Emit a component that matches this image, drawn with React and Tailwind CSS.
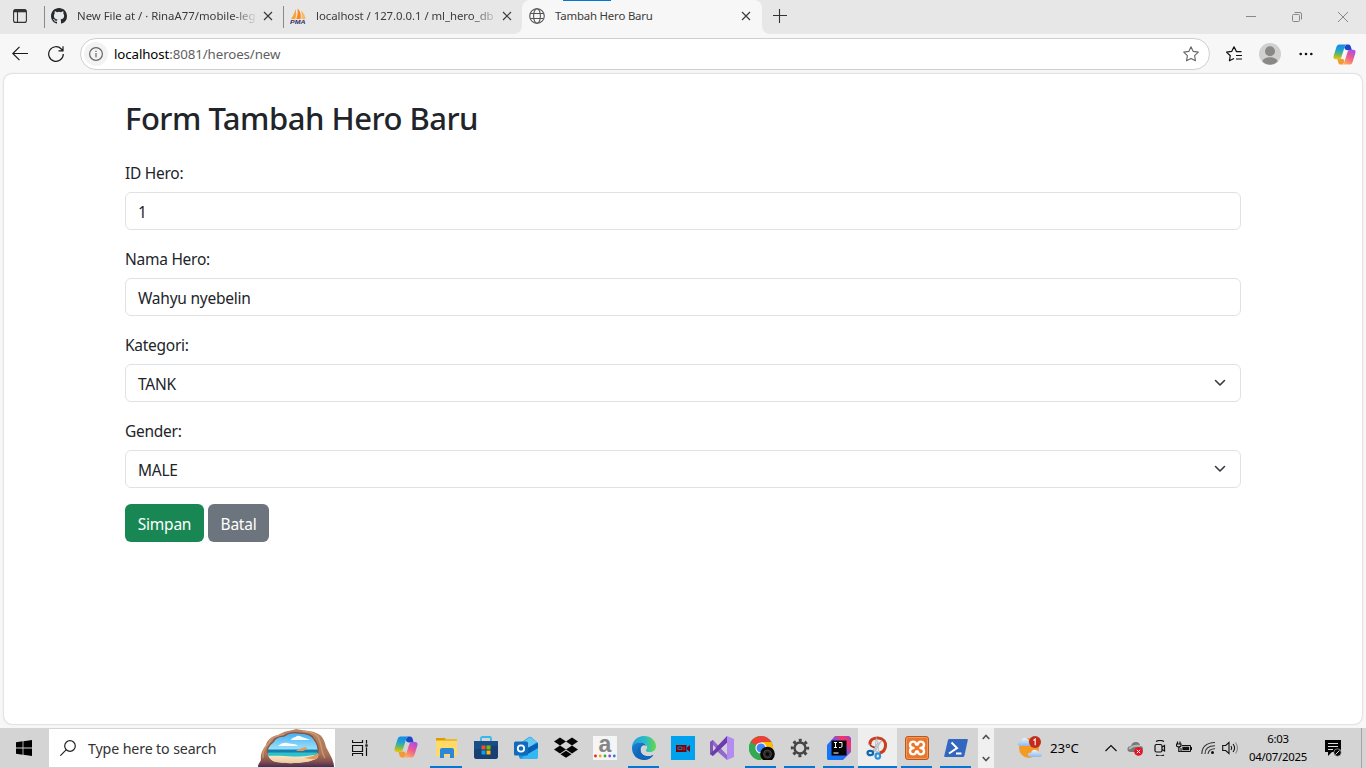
import React from "react";

function CloseX({ className = "" }) {
  return (
    <svg className={`h-[10px] w-[10px] shrink-0 ${className}`} viewBox="0 0 10 10" fill="none" stroke="#3b3b3b" strokeWidth="1.2">
      <path d="M1 1l8 8M9 1L1 9" />
    </svg>
  );
}

function Globe() {
  return (
    <svg className="h-4 w-4 shrink-0" viewBox="0 0 16 16" fill="none" stroke="#555" strokeWidth="1.1">
      <circle cx="8" cy="8" r="7.3" />
      <ellipse cx="8" cy="8" rx="3.4" ry="7.3" />
      <path d="M1.4 5.5h13.2M1.4 10.5h13.2" />
    </svg>
  );
}

function GitHub() {
  return (
    <svg className="h-4 w-4 shrink-0" viewBox="0 0 16 16" fill="#24292f">
      <path d="M8 0C3.58 0 0 3.58 0 8c0 3.54 2.29 6.53 5.47 7.59.4.07.55-.17.55-.38 0-.19-.01-.82-.01-1.49-2.01.37-2.53-.49-2.69-.94-.09-.23-.48-.94-.82-1.13-.28-.15-.68-.52-.01-.53.63-.01 1.08.58 1.23.82.72 1.21 1.87.87 2.33.66.07-.52.28-.87.51-1.07-1.78-.2-3.64-.89-3.64-3.95 0-.87.31-1.59.82-2.15-.08-.2-.36-1.02.08-2.12 0 0 .67-.21 2.2.82a7.6 7.6 0 0 1 4 0c1.53-1.04 2.2-.82 2.2-.82.44 1.1.16 1.92.08 2.12.51.56.82 1.27.82 2.15 0 3.07-1.87 3.75-3.65 3.95.29.25.54.73.54 1.48 0 1.07-.01 1.93-.01 2.2 0 .21.15.46.55.38A8.01 8.01 0 0 0 16 8c0-4.42-3.58-8-8-8z" />
    </svg>
  );
}

function PhpMyAdmin() {
  return (
    <svg className="h-4 w-4 shrink-0" viewBox="0 0 16 16">
      <path d="M1 11C3 8 4.500 5 5.500 1C6.500 5 6.300 8 5.300 11z" fill="#f9a33a" />
      <path d="M6.300 11C7.500 7.500 8 4 7.600 .500C10.500 3 11.500 7.500 10.500 11z" fill="#f68b1f" />
      <path d="M11.300 11C12 8 11.800 5 11 2.500C13.800 4.500 15.300 8 15.500 11z" fill="#fbb867" />
      <text x="0" y="15.500" fontSize="6" fontWeight="bold" fontStyle="italic" fill="#2d2f6b" fontFamily="Liberation Sans" textLength="15.500" lengthAdjust="spacingAndGlyphs">PMA</text>
    </svg>
  );
}

function Copilot({ id, className }) {
  return (
    <svg className={className} viewBox="0 0 24 22">
      <defs>
        <linearGradient id={`${id}a`} x1=".4" y1="0" x2=".3" y2="1">
          <stop offset="0" stopColor="#168bea" />
          <stop offset=".4" stopColor="#22a6c9" />
          <stop offset=".7" stopColor="#72bd52" />
          <stop offset="1" stopColor="#f4c500" />
        </linearGradient>
        <linearGradient id={`${id}b`} x1=".8" y1="0" x2=".3" y2="1">
          <stop offset="0" stopColor="#a64df0" />
          <stop offset=".5" stopColor="#ee5b91" />
          <stop offset="1" stopColor="#ffad55" />
        </linearGradient>
      </defs>
      <path d="M14 .5h2.200c1.500 0 2 1 2.500 2.500l1 3.500h-4.500c-2 0-3-1-3.500-3z" fill="#1b48c9" />
      <path d="M10 21.500H8c-1.500 0-2.200-1-2.600-2.500l-.9-3.500H9c2 0 2.500 1 3 3z" fill="#f29a38" />
      <path d="M7.500.5h7c-1.300.3-2 1.500-2.500 3L9 13c-.6 2-1.500 3-3.500 3H3C.8 16 0 14.500.600 12.500L3.600 3C4.300 1 5.500.500 7.500.500z" fill={`url(#${id}a)`} />
      <path d="M16.500 21.500h-7c1.300-.3 2-1.500 2.500-3L15 9c.6-2 1.500-3 3.500-3H21c2.200 0 3 1.500 2.400 3.500L20.400 19c-.7 2-1.900 2.500-3.900 2.500z" fill={`url(#${id}b)`} />
    </svg>
  );
}

function TabBar() {
  return (
    <div className="flex h-[34px] bg-[#e7e7e7] text-[11.4px] text-[#3b3b3b]">
      <div className="flex w-[44px] items-center pl-[13px] pb-[2px]">
        <svg className="h-[14px] w-[14px]" viewBox="0 0 14 14" fill="none" stroke="#333" strokeWidth="1.100">
          <rect x=".6" y=".6" width="12.800" height="12.800" rx="2" />
          <path d="M1 2h12" strokeWidth="2.600" />
          <path d="M4.500 3v10" />
        </svg>
      </div>
      <div className="flex w-[239px] items-center border-l border-[#8a8a8a] pb-[2px] pl-[6px] [border-image:linear-gradient(#e7e7e7_20%,#8a8a8a_20%,#8a8a8a_80%,#e7e7e7_80%)_1]">
        <GitHub />
        <span className="ml-[10px] w-[179px] whitespace-nowrap tracking-[-0.03px] [mask-image:linear-gradient(90deg,#000_155px,transparent_181px)]">New File at / · RinaA77/mobile-leg</span>
        <CloseX className="ml-[7px]" />
      </div>
      <div className="flex w-[239px] items-center rounded-br-lg border-l border-[#8a8a8a] pb-[2px] pl-[6px] [border-image:linear-gradient(#e7e7e7_20%,#8a8a8a_20%,#8a8a8a_80%,#e7e7e7_80%)_1]">
        <PhpMyAdmin />
        <span className="ml-[10px] w-[179px] whitespace-nowrap tracking-[-0.05px] [mask-image:linear-gradient(90deg,#000_157px,transparent_183px)]">localhost / 127.0.0.1 / ml_hero_db</span>
        <CloseX className="ml-[7px]" />
      </div>
      <div className="relative flex w-[240px] items-center rounded-t-lg bg-[#f7f7f7] pb-[2px] pl-[7px]">
        <div className="absolute left-[41px] top-0 h-[1px] w-[48px] bg-[#0078d4]" />
        <svg className="absolute -left-2 bottom-0 h-2 w-2" viewBox="0 0 8 8"><path d="M8 0v8H0a8 8 0 0 0 8-8z" fill="#f7f7f7" /></svg>
        <svg className="absolute -right-2 bottom-0 h-2 w-2" viewBox="0 0 8 8"><path d="M0 0v8h8a8 8 0 0 1-8-8z" fill="#f7f7f7" /></svg>
        <Globe />
        <span className="ml-[10px] w-[179px] whitespace-nowrap tracking-[-0.18px]">Tambah Hero Baru</span>
        <CloseX className="ml-[7px]" />
      </div>
      <div className="flex flex-1 items-center pb-[2px] pl-[10.500px]">
        <svg className="h-[14px] w-[14px]" viewBox="0 0 14 14" stroke="#333" strokeWidth="1.100"><path d="M0 6.500h14M6.500 0v14" /></svg>
      </div>
      <div className="flex w-[120px] items-center justify-between pr-[18px]">
        <svg className="h-[10px] w-[10px]" viewBox="0 0 10 10" stroke="#888"><path d="M0 4.500h10" /></svg>
        <svg className="h-[10px] w-[10px]" viewBox="0 0 10 10" fill="none" stroke="#888"><rect x=".5" y="2.500" width="7" height="7" rx="1" /><path d="M2.500 .500h5.500q1.500 0 1.500 1.500v5.500" /></svg>
        <svg className="h-[10px] w-[10px]" viewBox="0 0 10 10" stroke="#888"><path d="M0 0l10 10M10 0L0 10" /></svg>
      </div>
    </div>
  );
}

function Toolbar() {
  return (
    <div className="flex h-[40px] items-center bg-[#f7f7f7]">
      <svg className="ml-[12px] h-4 w-4" viewBox="0 0 16 16" fill="none" stroke="#1a1a1a" strokeWidth="1.200"><path d="M16 7.500H.800M7.500 .900L.800 7.500l6.700 6.600" /></svg>
      <svg className="ml-[20px] h-4 w-4" viewBox="0 0 16 16" fill="none" stroke="#1a1a1a" strokeWidth="1.200"><path d="M15.300 8A7.300 7.300 0 1 1 13.300 3L15 4.800M15 .300v4.500h-4.500" /></svg>
      <div className="ml-[16px] flex h-8 w-[1130px] items-center rounded-full border border-[#cfcfcf] bg-white">
        <div className="ml-[3px] flex h-6 w-6 items-center justify-center rounded-full bg-[#f3f3f3]">
          <svg className="h-[14px] w-[14px]" viewBox="0 0 14 14" fill="none" stroke="#666" strokeWidth="1.200"><circle cx="7" cy="7" r="6.400" /><path d="M7 6v4.200M7 3.700v1.300" /></svg>
        </div>
        <span className="ml-[6px] flex-1 pt-[2px] text-[13.3px] tracking-[-0.1px] text-[#5f5f5f]"><span className="text-black">localhost</span>:8081/heroes/new</span>
        <svg className="mr-[10px] h-4 w-4" viewBox="0 0 16 16" fill="none" stroke="#666" strokeWidth="1.100" strokeLinejoin="round"><path d="M8 .800l2.200 4.600 5.100.700-3.700 3.500.9 5.200L8 12.400l-4.500 2.400.9-5.200L.700 6.100l5.100-.7z" /></svg>
      </div>
      <svg className="ml-[16px] h-4 w-4" viewBox="0 0 16 16" fill="none" stroke="#111" strokeWidth="1.200" strokeLinejoin="round"><path d="M15.500 5.600h-5L8 .800 5.700 5.400.500 6.100l3.800 3.600-.9 5.100L8 12.500M10 9.500h6M10 13h6" /></svg>
      <svg className="ml-[17px] h-[22px] w-[22px]" viewBox="0 0 22 22"><circle cx="11" cy="11" r="11" fill="#d2d0ce" /><circle cx="11" cy="8.200" r="5" fill="#8a8886" /><path d="M3.500 18.800C3.500 12.700 18.500 12.700 18.500 18.800A11 11 0 0 1 3.500 18.800z" fill="#8a8886" /></svg>
      <svg className="ml-[18px] h-[4px] w-[14px]" viewBox="0 0 14 4" fill="#111"><circle cx="1.700" cy="2" r="1.300" /><circle cx="7" cy="2" r="1.300" /><circle cx="12.300" cy="2" r="1.300" /></svg>
      <Copilot id="top" className="ml-[20px] h-[21px] w-[23px]" />
    </div>
  );
}

function Field({ label, value, select }) {
  return (
    <div className="mb-4">
      <label className="mb-2 block h-6 text-[15.5px] leading-[26px] tracking-[-0.26px]">{label}</label>
      <div className="flex h-[38px] items-center justify-between rounded-md border border-[#dee2e6] bg-white pl-3 pr-3">
        <span className="pt-[2px] text-[15.5px] leading-6 tracking-[-0.24px]">{value}</span>
        {select && (
          <svg className="h-4 w-4" viewBox="0 0 16 16" fill="none" stroke="#343a40" strokeLinecap="round" strokeLinejoin="round" strokeWidth="1.600"><path d="m3.500 5.500 4.500 4.500 4.500-4.500" /></svg>
        )}
      </div>
    </div>
  );
}

function Page() {
  return (
    <div className="h-[654px] bg-[#f7f7f7] px-1 pb-1">
      <main className="h-[650px] w-[1358px] rounded-lg bg-white pt-6 text-[#212529] shadow-[0_0_2px_rgba(0,0,0,0.3)]">
        <div className="ml-[121px] w-[1116px]">
          <h1 className="mb-6 h-[38.4px] whitespace-nowrap text-[31px] font-[550] leading-[41px] tracking-[-0.49px]">Form Tambah Hero Baru</h1>
          <Field label="ID Hero:" value="1" />
          <Field label="Nama Hero:" value="Wahyu nyebelin" />
          <Field label="Kategori:" value="TANK" select />
          <Field label="Gender:" value="MALE" select />
          <div className="flex gap-1 text-[15.5px] tracking-[-0.24px] text-white">
            <button className="h-[38px] w-[79px] rounded-md bg-[#198754] pt-[2px]">Simpan</button>
            <button className="h-[38px] w-[61px] rounded-md bg-[#6c757d] pt-[2px]">Batal</button>
          </div>
        </div>
      </main>
    </div>
  );
}

function Cave() {
  return (
    <svg className="h-[38px] w-[76px] shrink-0" viewBox="0 0 76 38">
      <defs>
        <linearGradient id="rock" x1="0" y1="0" x2="0" y2="1"><stop offset="0" stopColor="#b98563" /><stop offset=".65" stopColor="#ab7458" /><stop offset=".85" stopColor="#85514f" /><stop offset="1" stopColor="#4f2850" /></linearGradient>
        <linearGradient id="sky" x1="0" y1="0" x2="0" y2="1"><stop offset="0" stopColor="#2fa4ee" /><stop offset=".6" stopColor="#a8e8fc" /></linearGradient>
        <linearGradient id="sand" x1="0" y1="0" x2="0" y2="1"><stop offset="0" stopColor="#fbe9c4" /><stop offset="1" stopColor="#e9b888" /></linearGradient>
        <clipPath id="mouth"><path d="M10 24C8 19 11 16 15 13c2-5 6-6 11-6 4-3 10-4 15-3 7 0 13 2 15 6 3 4 5 9 4 14 1 4-1 6-5 7-10 4-32 4-40 1-3-2-5-4-5-8z" /></clipPath>
      </defs>
      <path d="M0 38c0-4 3-5 3-8-1-5 2-10 5-14 1-5 6-9 12-10C26 2 32 2 38 0c7 2 15 1 20 4 7 2 9 9 10 14 3 6 8 13 8 20z" fill="url(#rock)" />
      <g clipPath="url(#mouth)">
        <path d="M0 0h76v38H0z" fill="url(#sky)" />
        <path d="M33 11c1-3 4-2 6-4 3-1 5 2 8 2 2 1 4 1 5 2zM20 17c2-1 3-3 6-3 4-1 5 1 9 1 3 0 4 1 5 2z" fill="#f7fcff" />
        <path d="M0 20.500h70v4H0z" fill="#127fae" />
        <path d="M0 23.500h70v4H0z" fill="#2fc0cc" />
        <path d="M0 28c16-2 25-1 36 0 9 0 17-2 26-2v12H0z" fill="url(#sand)" />
        <path d="M38 22c3-2 5-3 10-4l1 2-4 2zM46 29l9-2 6-3v7z" fill="#e6995a" />
      </g>
      <path d="M10 24C8 19 11 16 15 13c2-5 6-6 11-6 4-3 10-4 15-3 7 0 13 2 15 6 3 4 5 9 4 14" fill="none" stroke="#87523f" strokeWidth="1.300" />
      <path d="M5 29c-1-6 2-11 6-15 2-6 9-7 15-9M44 2c8 1 15 2 17 8 3 6 2 14 6 19" fill="none" stroke="#d9a77c" strokeWidth="1.600" opacity=".65" />
    </svg>
  );
}

const icons = {
  explorer: (
    <svg className="h-6 w-6" viewBox="0 0 24 24"><path d="M2 2h9l2 3H2z" fill="#dc9d00" /><path d="M2 4h8l2-1h11v3H2z" fill="#efb92e" /><path d="M2 5h21v15H2z" fill="#ffda69" /><path d="M6 22v-8q0-2 2-2h10q2 0 2 2v8h-4v-4h-6v4z" fill="#2c88d6" /></svg>
  ),
  store: (
    <svg className="h-6 w-6" viewBox="0 0 24 24"><path d="M7 6V2.500Q7 1 8.500 1h7Q17 1 17 2.500V6" fill="none" stroke="#35b8ee" strokeWidth="1.800" /><path d="M0 5h24v15q0 3-3 3H3q-3 0-3-3z" fill="#194f87" /><path d="M0 14l24-5v11q0 3-3 3H3q-3 0-3-3z" fill="#173f74" /><path d="M7.500 9.500h4v4h-4z" fill="#f25022" /><path d="M12.500 9.500h4v4h-4z" fill="#7fba00" /><path d="M7.500 14.500h4v4h-4z" fill="#00a4ef" /><path d="M12.500 14.500h4v4h-4z" fill="#ffb900" /></svg>
  ),
  outlook: (
    <svg className="h-6 w-6" viewBox="0 0 24 24"><path d="M5 8l10-7q1-.700 2 0l7 6v13q0 3-3 3H8q-3 0-3-3z" fill="#1490df" /><path d="M7 7l9-6 7 5-10 7z" fill="#65c8f3" /><path d="M11 13L24 7v6l-12 9z" fill="#075eb5" /><path d="M7 22l17-10v9q0 2-3 2H9z" fill="#35b8f1" /><rect y="5.500" width="14" height="14" rx="1.500" fill="#0f6cbd" /><circle cx="7" cy="12.500" r="3.200" fill="none" stroke="#fff" strokeWidth="1.800" /></svg>
  ),
  dropbox: (
    <svg className="h-6 w-6" viewBox="0 0 24 24" fill="#050505"><path d="M6 1.500l6 4-6 4-6-4zM18 1.500l6 4-6 4-6-4zM6 9.500l6 4-6 4-6-4zM18 9.500l6 4-6 4-6-4zM12 14.800l5.500 3.500-5.500 3.500-5.500-3.500z" /></svg>
  ),
  amazon: (
    <div className="flex h-6 w-6 flex-col items-center bg-[#f5f5f5]"><span className="h-[18px] font-['Liberation_Sans',sans-serif] text-[23px] font-bold leading-[16px] text-[#858585]">a</span><svg className="h-1 w-6" viewBox="0 0 24 4"><circle cx="2.500" cy="2" r="1.400" fill="#e82121" /><circle cx="7.200" cy="2" r="1.400" fill="#f6a51a" /><circle cx="12" cy="2" r="1.400" fill="#34aa47" /><circle cx="16.700" cy="2" r="1.400" fill="#8b47d8" /><circle cx="21.300" cy="2" r="1.400" fill="#277fe5" /></svg></div>
  ),
  edge: (
    <svg className="h-6 w-6" viewBox="0 0 24 24"><defs><linearGradient id="edge1"><stop stopColor="#219de0" /><stop offset=".55" stopColor="#27bdc9" /><stop offset="1" stopColor="#67d943" /></linearGradient><linearGradient id="edge2" x2="1" y2="1"><stop stopColor="#1683d8" /><stop offset="1" stopColor="#0b4d9c" /></linearGradient></defs><path d="M0 12C0 5 5 0 12 0s12 5 12 10c0 4-3 6-6.500 6-3 0-4.500-1.200-3.200-2.600C17 10 13 6.500 8.500 6.500 4.500 6.500 1 9 0 12z" fill="url(#edge1)" /><path d="M0 12c0-3 3.500-5.500 8.500-5.500 3 0 5.400 1.600 6 3.500-3-2-6 .5-6 4 0 5 6 8 13 5-2 3-5.500 5-9.500 5C5 24 0 19 0 12z" fill="url(#edge2)" /><path d="M8.500 14c0 5 6 8 13 5-4 5-10 5.500-14 2.500-3.500-3-3-8 1-11-.400 1-.200 2 0 3.500z" fill="#1067bb" /></svg>
  ),
  recorder: (
    <svg className="h-6 w-6" viewBox="0 0 24 24"><path d="M0 0h24v24H0z" fill="#00a2ed" /><path d="M5 9h10.500v7H5zM16 11.500l3-2.500v7l-3-2.500z" fill="#79000b" /><path d="M7 11h4v2.500H7z" fill="none" stroke="#2388bb" strokeWidth=".8" /><path d="M13 10.500v4" stroke="#a83743" /></svg>
  ),
  vs: (
    <svg className="h-6 w-6" viewBox="0 0 24 24"><path d="M0 6l3-2 15 16-1 4L0 9z" fill="#9168cf" /><path d="M0 6l3-2v16l-3-2z" fill="#8053b5" /><path d="M3 20l-3-2 17-18 2 5z" fill="#6c3cad" /><path d="M17 0l7 3v18l-7 3z" fill="#b48bef" /><path d="M3 9v6l3-3zM17 7v10l-5-5z" fill="#d3d0d9" /></svg>
  ),
  chrome: (
    <svg className="ml-[4px] h-6 w-[27px]" viewBox="0 0 27 24"><circle cx="12" cy="12" r="12" fill="#34a853" /><path d="M12 12L1.600 6A12 12 0 0 1 22.400 6z" fill="#ea4335" /><path d="M1.600 6A12 12 0 0 0 12 24l5.200-9h-10z" fill="#34a853" /><path d="M12 6h10.400A12 12 0 0 1 12 24l5.200-9z" fill="#fbbc04" /><circle cx="12" cy="12" r="5.600" fill="#fff" /><circle cx="12" cy="12" r="4.500" fill="#4285f4" /><circle cx="18.500" cy="18" r="7.300" fill="#080808" /><circle cx="18.500" cy="18" r="4" fill="#292929" stroke="#64554a" strokeWidth=".7" /><circle cx="18.500" cy="18" r="1.700" fill="#050505" /></svg>
  ),
  settings: (
    <svg className="h-5 w-5" viewBox="0 0 20 20" fill="none" stroke="#444"><circle cx="10" cy="10" r="5.500" strokeWidth="2.400" /><circle cx="10" cy="10" r="7.700" strokeWidth="3" strokeDasharray="2.900 3.148" strokeDashoffset="1.450" /></svg>
  ),
  idea: (
    <svg className="h-6 w-6" viewBox="0 0 24 24"><defs><linearGradient id="idea" x1="0" y1="1" x2="1" y2="0"><stop stopColor="#087cfa" /><stop offset=".45" stopColor="#2a6cf5" /><stop offset=".6" stopColor="#8a50d8" /><stop offset=".78" stopColor="#fe315d" /><stop offset="1" stopColor="#8c42dc" /></linearGradient></defs><path d="M8 0h14l2 2v14l-8 8H1l-1-1V9z" fill="url(#idea)" /><path d="M4.500 4.500h15v15h-15z" fill="#050505" /><path d="M7 6.500h3m-1.500 0v5m-1.500 0h3M12 6.500h3v3.600q0 1.400-1.400 1.400H12M6.500 17h5" fill="none" stroke="#fff" strokeWidth="1" /></svg>
  ),
  snip: (
    <svg className="h-6 w-6" viewBox="0 0 24 24"><path d="M4 8.500C3.500 3.500 8 1.800 12 2c5.500.3 8 4 7.500 8-.4 4-2.500 6.300-6 7" fill="none" stroke="#c8401f" strokeWidth="3" /><path d="M4 8.500Q6 12 12 11.500" fill="none" stroke="#a83218" strokeWidth="1.600" /><path d="M10.500 1l2.300 14-2.600 1-.7-9z" fill="#e8eaec" stroke="#8e969f" strokeWidth=".5" /><path d="M15.500 5l-7 11-1.700-1.500L11 8z" fill="#c9cdd2" stroke="#9ba2aa" strokeWidth=".5" /><ellipse cx="4.300" cy="17" rx="2.800" ry="2.200" fill="none" stroke="#0f67ae" strokeWidth="2.200" /><ellipse cx="11.800" cy="20" rx="2.300" ry="2.600" fill="none" stroke="#2b93de" strokeWidth="2.200" /></svg>
  ),
  xampp: (
    <svg className="h-6 w-6" viewBox="0 0 24 24"><rect x=".5" y=".5" width="23" height="23" rx="2.500" fill="#ea762b" stroke="#b9581c" /><rect x="1.500" y="1.500" width="21" height="21" rx="2" fill="none" stroke="#f09a62" /><path d="M8.500 12C6 12 5 10.500 5 8.800 5 6.800 6.500 5.600 8.300 5.600c1.600 0 2.600 1 2.900 3h1.600c.3-2 1.300-3 2.900-3C17.500 5.600 19 6.800 19 8.800S18 12 15.500 12c2.500 0 3.500 1.500 3.500 3.200 0 2-1.500 3.200-3.300 3.200-1.600 0-2.600-1-2.900-3h-1.600c-.3 2-1.300 3-2.900 3C6.500 18.400 5 17.200 5 15.200S6 12 8.500 12z" fill="none" stroke="#fff" strokeWidth="2.400" strokeLinejoin="round" /></svg>
  ),
  powershell: (
    <svg className="h-6 w-6" viewBox="0 0 24 24"><path d="M5.500 3H23q1 0 .800 1l-3.500 16q-.300 1-1.300 1H1q-1 0-.800-1L4 4q.300-1 1.500-1z" fill="#3267bf" /><path d="M7.500 6.500L13 12l-8 5.500M12 17.500h5.500" fill="none" stroke="#fff" strokeWidth="2" /></svg>
  ),
};

const apps = [
  ["copilot", false],
  ["explorer", true],
  ["store", false],
  ["outlook", false],
  ["dropbox", false],
  ["amazon", false],
  ["edge", true],
  ["recorder", false],
  ["vs", false],
  ["chrome", true],
  ["settings", true],
  ["idea", true],
  ["snip", true],
  ["xampp", true],
  ["powershell", true],
];

function AppIcon({ name, open, wide }) {
  const active = name === "snip";
  return (
    <div className={`relative flex h-10 shrink-0 items-center justify-center ${wide ? "w-[39.8px]" : "w-[39px]"} ${active ? "bg-[#eeeeee]" : ""}`}>
      {name === "copilot" ? <Copilot id="task" className="mb-[2px] h-[22px] w-6" /> : icons[name]}
      {open && <div className={`absolute bottom-0 h-[2px] bg-[#0078d7] ${active ? "inset-x-0" : "inset-x-[4px]"}`} />}
    </div>
  );
}

function Tray() {
  return (
    <div className="flex h-10 flex-1 items-center text-black">
      <svg className="ml-[23px] h-6 w-[26px]" viewBox="0 0 26 24"><defs><linearGradient id="cloud" x2="0" y2="1"><stop stopColor="#eaf4ff" /><stop offset="1" stopColor="#8fb9eb" /></linearGradient></defs><circle cx="12" cy="12" r="10" fill="#f59a22" /><path d="M4 10Q0 10 1 7q1-2 3-1Q5 1 9 2q3 1 3 4 3 0 3 2t-3 2z" fill="url(#cloud)" /><path d="M14 21q-4 0-3-3 1-2 3-1 1-4 5-3 3 1 3 4 3-1 3 1t-3 2z" fill="url(#cloud)" /><circle cx="18" cy="6" r="6" fill="#c42b1c" /><path d="M16.500 4.500L18.200 3v6.200" stroke="#fff" strokeWidth="1.100" fill="none" /></svg>
      <span className="ml-[6.500px] w-[30px] whitespace-nowrap pt-px text-[13.3px] tracking-[-0.1px]">23°C</span>
      <svg className="ml-[25px] h-3 w-3 overflow-visible" viewBox="0 0 12 12" fill="none" stroke="#111" strokeWidth="1.200"><path d="M.500 9L6 3.500 11.500 9" /></svg>
      <svg className="ml-[10px] h-4 w-4" viewBox="0 0 16 16"><path d="M4 12Q0 12 .500 8.500 1 6 4 6q1-4 5-4 4 .300 4 4 3 0 3 3t-3 3z" fill="#777" /><path d="M2 9Q6 5 13 6" stroke="#b5b5b5" strokeWidth="2" fill="none" /><circle cx="11.500" cy="11.500" r="4.300" fill="#e81123" /><path d="M9.800 9.800l3.400 3.400m0-3.400l-3.400 3.400" stroke="#fff" /></svg>
      <svg className="ml-[9px] h-4 w-4" viewBox="0 0 16 16" fill="none" stroke="#111" strokeWidth="1.200"><rect x="3" y="4.500" width="7" height="7.500" rx="1.500" /><path d="M10 7l2.500-1.500v5.500L10 9.500M4 1.500q4-2 8 0M4 15q4 2 8 0" /></svg>
      <svg className="ml-[8px] h-4 w-4" viewBox="0 0 16 16" fill="none" stroke="#111"><path d="M1.500 1.500v2m2.500-2v2M.500 4h4.500v2Q3 8 .500 6zM2.800 7.500v4h2" strokeWidth="1.200" /><path d="M6 5.500h8.500v6h-9.500V8" /><path d="M7 7.500h5.500v2h-5.500zM15.500 7v3" fill="#111" strokeWidth="1.300" /></svg>
      <svg className="ml-[9px] h-4 w-4" viewBox="0 0 16 16" fill="none" stroke="#333" strokeWidth="1.100"><path d="M.800 14Q1 3 14 2.500M4 14Q4 6 14 5.800M7 14Q7.500 9 14 8.800" /><circle cx="11.500" cy="12.500" r="1.500" fill="#111" stroke="none" /></svg>
      <svg className="ml-[5px] h-4 w-[17px]" viewBox="0 0 17 16" fill="none" stroke="#111" strokeWidth="1.100"><path d="M.700 5.500h3L7 2.500v11l-3.300-3h-3zM9 6q1.500 2 0 4M11 4q3.200 4 0 8" /><path d="M13.500 2.500q4 5.500 0 11" stroke="#888" /></svg>
      <div className="ml-[8px] flex w-[62px] flex-col items-center whitespace-nowrap text-[11.4px] leading-[18px] tracking-[-0.28px]"><span>6:03</span><span>04/07/2025</span></div>
      <svg className="ml-[16px] h-[17px] w-[17px]" viewBox="0 0 17 17"><path d="M0 0h16v12H7l-4 4v-4H0z" fill="#050505" /><path d="M3 3.500h10M3 6.500h10M3 9.500h5" stroke="#ddd" strokeWidth="1.100" /><circle cx="12.500" cy="12.500" r="3.700" fill="#050505" stroke="#ccc" strokeWidth=".6" /><path d="M10.500 14.500l4-4" stroke="#ddd" /></svg>
      <div className="ml-auto h-10 w-[5px] border-l border-[#a5a5a5]" />
    </div>
  );
}

function Taskbar() {
  return (
    <div className="flex h-10 items-center bg-[#d4d4d4]">
      <div className="flex w-[49px] pl-4"><svg className="h-4 w-4" viewBox="0 0 16 16" fill="#000"><path d="M0 2.200L6.600 1.300v6.300H0zM7.400 1.200L16 0v7.600H7.400zM0 8.400h6.600v6.300L0 13.800zM7.400 8.400H16V16l-8.600-1.200z" /></svg></div>
      <div className="flex h-[38px] w-[286px] items-center overflow-hidden bg-white">
        <svg className="ml-[11px] h-4 w-4" viewBox="0 0 16 16" fill="none" stroke="#222" strokeWidth="1.200"><circle cx="10" cy="6" r="5.300" /><path d="M6.300 9.700L.300 15.700" /></svg>
        <span className="ml-[12px] w-[170px] shrink-0 whitespace-nowrap pt-[2px] text-[14.2px] tracking-[-0.12px] text-[#333]">Type here to search</span>
        <Cave />
      </div>
      <div className="flex w-[51.500px] pl-[17px]"><svg className="h-4 w-[17px]" viewBox="0 0 17 16" fill="none" stroke="#111"><path d="M.500 0v2.500h10V0M.500 5.500h10v6H.500zM.500 16v-2.500h10V16M14.500 0v16" strokeWidth="1.200" /><path d="M13 4h3v3h-3z" fill="#111" stroke="#d4d4d4" strokeWidth=".7" /></svg></div>
      <div className="flex">{apps.map(([name, open], i) => <AppIcon key={name} name={name} open={open} wide={i < 5} />)}</div>
      <div className="ml-[3px] flex h-10 w-4 flex-col items-center justify-between bg-[#f0f0f0] py-[5px]">
        <svg className="h-2 w-2" viewBox="0 0 8 8" fill="none" stroke="#555" strokeWidth="1.700"><path d="M.700 6L4 2.500 7.300 6" /></svg>
        <svg className="h-2 w-2" viewBox="0 0 8 8" fill="none" stroke="#555" strokeWidth="1.700"><path d="M.700 2L4 5.500 7.300 2" /></svg>
      </div>
      <Tray />
    </div>
  );
}

export default function App() {
  return (
    <div className="h-[768px] w-[1366px] overflow-hidden bg-[#f7f7f7] font-['Noto_Sans','Open_Sans',sans-serif]">
      <TabBar />
      <Toolbar />
      <Page />
      <Taskbar />
    </div>
  );
}
